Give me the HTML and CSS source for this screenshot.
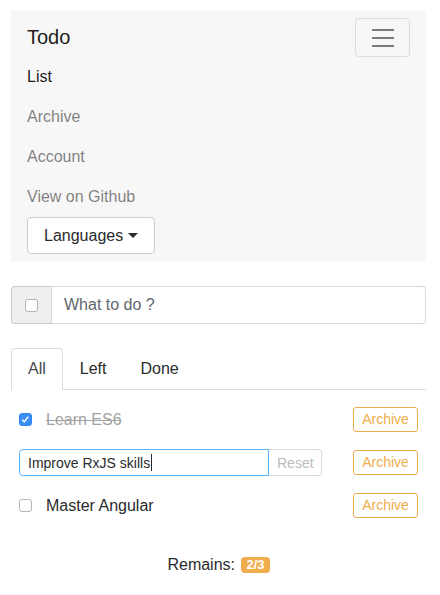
FILE: index.html
```html
<!DOCTYPE html>
<html lang="en">
<head>
<meta charset="utf-8">
<title>Todo</title>
<link rel="stylesheet" href="styles.css">
</head>
<body>
<div class="page">
  <nav class="navbar">
    <span class="brand">Todo</span>
    <button class="toggler" type="button" aria-label="Toggle navigation">
      <svg width="30" height="30" viewBox="0 0 30 30" aria-hidden="true">
        <path d="M4 7h22M4 15h22M4 23h22" stroke="rgba(0,0,0,0.5)" stroke-width="2" stroke-linecap="butt" fill="none"/>
      </svg>
    </button>
    <div class="collapse">
      <a class="nav-link active" href="#">List</a>
      <a class="nav-link" href="#">Archive</a>
      <a class="nav-link" href="#">Account</a>
      <a class="nav-link" href="#">View on Github</a>
      <button class="btn-lang" type="button">Languages<span class="caret"></span></button>
    </div>
  </nav>

  <div class="input-group">
    <span class="addon"><input class="check" type="checkbox"></span>
    <input class="new-todo" type="text" placeholder="What to do ?">
  </div>

  <ul class="tabs">
    <li><a class="tab active" href="#">All</a></li>
    <li><a class="tab" href="#">Left</a></li>
    <li><a class="tab" href="#">Done</a></li>
  </ul>

  <ul class="items">
    <li class="item">
      <label class="item-label"><input class="check" type="checkbox" checked><span class="done">Learn ES6</span></label>
      <button class="btn-archive" type="button">Archive</button>
    </li>
    <li class="item">
      <div class="edit-group">
        <input class="edit-input" type="text" value="Improve RxJS skills"><span class="text-caret"></span>
        <button class="btn-reset" type="button">Reset</button>
      </div>
      <button class="btn-archive" type="button">Archive</button>
    </li>
    <li class="item">
      <label class="item-label"><input class="check" type="checkbox"><span>Master Angular</span></label>
      <button class="btn-archive" type="button">Archive</button>
    </li>
  </ul>

  <p class="remains">Remains: <span class="badge">2/3</span></p>
</div>
</body>
</html>
```

FILE: styles.css
```css
* { box-sizing: border-box; }

body {
  margin: 0;
  font-family: "Liberation Sans", Arial, sans-serif;
  font-size: 16px;
  line-height: 1.5;
  color: #292b2c;
  background: #fff;
}

.page {
  padding: 10px 14px 0 11px;
}

/* Navbar */
.navbar {
  background: #f7f7f7;
  padding: 8px 16px;
  display: flex;
  flex-wrap: wrap;
  justify-content: space-between;
  align-items: center;
}

.brand {
  font-size: 20px;
  line-height: 29px;
  padding: 5px 0;
  color: rgba(0, 0, 0, 0.9);
}

.toggler {
  width: 55px;
  height: 39px;
  padding: 0;
  margin: 0;
  border: 1px solid rgba(0, 0, 0, 0.1);
  border-radius: 4px;
  background: transparent;
  display: flex;
  align-items: center;
  justify-content: center;
}

.toggler svg { display: block; }

.collapse {
  flex-basis: 100%;
  display: flex;
  flex-direction: column;
  align-items: flex-start;
}

.nav-link {
  display: block;
  padding: 8px 0;
  line-height: 24px;
  text-decoration: none;
  color: rgba(0, 0, 0, 0.5);
}

.nav-link.active { color: rgba(0, 0, 0, 0.9); }

.btn-lang {
  font-family: inherit;
  font-size: 16px;
  line-height: 19px;
  height: 37px;
  padding: 8px 16px;
  color: #292b2c;
  background: #fff;
  border: 1px solid #ccc;
  border-radius: 4px;
  display: inline-flex;
  align-items: center;
}

.caret {
  display: inline-block;
  width: 0;
  height: 0;
  margin-left: 5px;
  border-top: 5px solid #292b2c;
  border-left: 5px solid transparent;
  border-right: 5px solid transparent;
}

/* New todo input */
.input-group {
  display: flex;
  margin-top: 24px;
  height: 38px;
}

.addon {
  width: 40px;
  display: flex;
  align-items: center;
  justify-content: center;
  background: #eceeef;
  border: 1px solid rgba(0, 0, 0, 0.15);
  border-right: 0;
  border-radius: 4px 0 0 4px;
}

.new-todo {
  flex: 1;
  min-width: 0;
  font-family: inherit;
  font-size: 16px;
  padding: 8px 12px;
  color: #464a4c;
  border: 1px solid rgba(0, 0, 0, 0.15);
  border-radius: 0 4px 4px 0;
  outline: none;
}

.new-todo::placeholder { color: #5f666d; opacity: 1; }

/* Checkbox */
.check {
  appearance: none;
  -webkit-appearance: none;
  width: 13px;
  height: 13px;
  margin: 0;
  border: 1px solid #b4b4b4;
  border-radius: 3px;
  background: #fff;
  flex: none;
}

.check:checked {
  border-color: #2f86f6;
  background: #3a8ff7 url("data:image/svg+xml;utf8,<svg xmlns='http://www.w3.org/2000/svg' width='13' height='13' viewBox='0 0 13 13'><path d='M3.3 6.6l2 2.2 4-5.2' stroke='white' stroke-width='1.4' fill='none'/></svg>") center / 13px 13px no-repeat;
}

/* Tabs */
.tabs {
  list-style: none;
  margin: 24px 0 0;
  padding: 0;
  display: flex;
  border-bottom: 1px solid #ddd;
}

.tab {
  display: block;
  padding: 8px 16px;
  line-height: 24px;
  margin-bottom: -1px;
  border: 1px solid transparent;
  border-radius: 4px 4px 0 0;
  text-decoration: none;
  color: #292b2c;
}

.tab.active {
  border-color: #ddd #ddd #fff;
  background: #fff;
  color: #464a4c;
}

/* Items */
.items {
  list-style: none;
  margin: 8px 0 0;
  padding: 0 8px;
}

.item {
  height: 43px;
  display: flex;
  align-items: center;
  justify-content: space-between;
}

.item-label {
  display: flex;
  align-items: center;
  gap: 14px;
  color: #292b2c;
}

.done {
  color: #a3a3a3;
  text-decoration: line-through;
}

.edit-group {
  display: flex;
  height: 27px;
  position: relative;
}

.edit-input {
  width: 250px;
  font-family: inherit;
  font-size: 14px;
  padding: 0 8px;
  color: #292b2c;
  border: 1px solid #5cb3fd;
  border-radius: 4px 0 0 4px;
  outline: none;
}

.text-caret {
  position: absolute;
  left: 132px;
  top: 5px;
  width: 1px;
  height: 17px;
  background: #292b2c;
}

.btn-reset {
  width: 53px;
  font-family: inherit;
  font-size: 14px;
  padding: 0 8px;
  color: #bbb;
  background: #fff;
  border: 1px solid rgba(0, 0, 0, 0.15);
  border-left: 0;
  border-radius: 0 4px 4px 0;
}

.btn-archive {
  width: 65px;
  height: 25px;
  font-family: inherit;
  font-size: 14px;
  line-height: 19px;
  padding: 2px 0;
  color: #f0ad4e;
  background: #fff;
  border: 1px solid #f0ad4e;
  border-radius: 3px;
}

/* Remains */
.remains {
  margin: 26px 0 0;
  text-align: center;
  line-height: 24px;
}

.badge {
  display: inline-block;
  margin-left: 2px;
  padding: 2px 5px;
  font-size: 13px;
  font-weight: bold;
  line-height: 12px;
  height: 16px;
  color: #fff;
  background: #f0ad4e;
  border-radius: 4px;
  vertical-align: 1px;
}
```
